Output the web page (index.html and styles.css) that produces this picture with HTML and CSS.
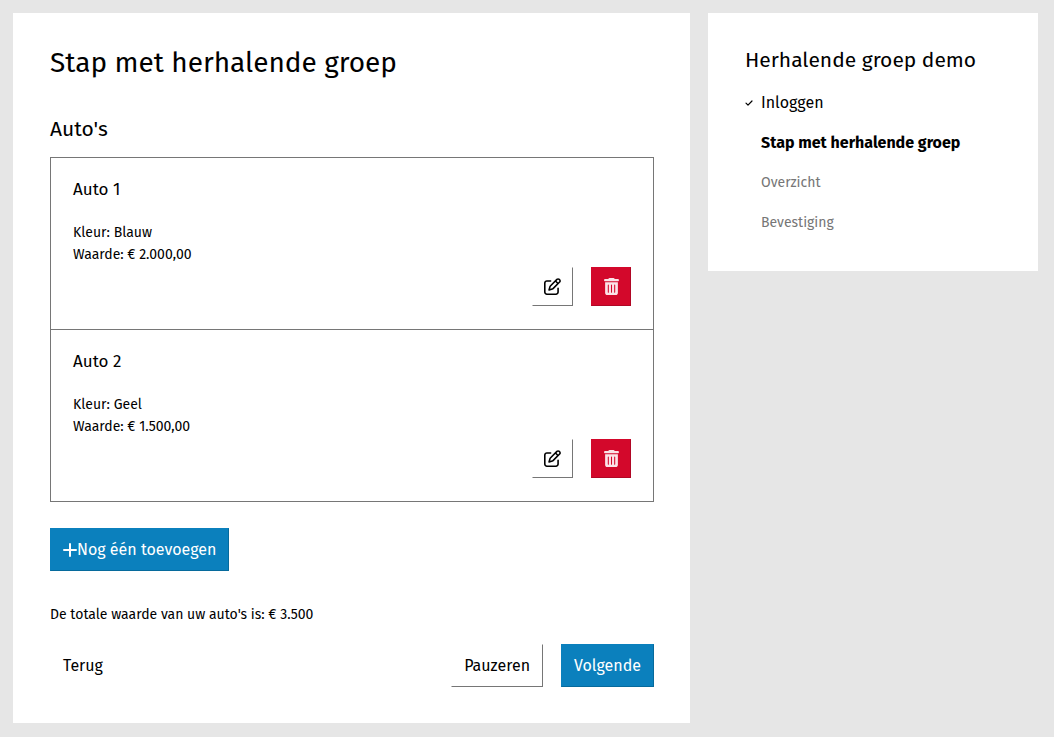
FILE: index.html
```html
<!DOCTYPE html>
<html lang="nl">
<head>
<meta charset="utf-8">
<meta name="viewport" content="width=device-width, initial-scale=1">
<title>Herhalende groep demo</title>
<link rel="stylesheet" href="styles.css">
</head>
<body>
<svg class="sprite" aria-hidden="true">
  <symbol id="icon-edit" viewBox="0 0 512 512"><path d="M441 58.900L453.100 71c9.400 9.400 9.400 24.600 0 33.900L424 134.100 377.900 88 407 58.900c9.400-9.400 24.600-9.400 33.900 0zM209.800 256.200L344 121.900 390.100 168 255.800 302.200c-2.900 2.900-6.500 5-10.400 6.100l-58.500 16.700 16.700-58.500c1.100-3.900 3.200-7.500 6.100-10.400zM373.100 25L175.800 222.200c-8.700 8.700-15 19.400-18.300 31.100l-28.600 100c-2.400 8.400-.1 17.400 6.100 23.600s15.200 8.500 23.600 6.100l100-28.600c11.800-3.400 22.500-9.700 31.100-18.300L487 138.900c28.100-28.100 28.100-73.700 0-101.800L474.900 25C446.800-3.100 401.200-3.100 373.100 25zM88 64C39.400 64 0 103.400 0 152V424c0 48.600 39.400 88 88 88H360c48.600 0 88-39.400 88-88V312c0-13.300-10.700-24-24-24s-24 10.700-24 24V424c0 22.100-17.900 40-40 40H88c-22.100 0-40-17.900-40-40V152c0-22.100 17.900-40 40-40H200c13.300 0 24-10.700 24-24s-10.700-24-24-24H88z"/></symbol>
  <symbol id="icon-trash" viewBox="0 0 448 512"><path d="M135.200 17.700C140.600 6.800 151.700 0 163.800 0H284.200c12.100 0 23.200 6.800 28.600 17.700L320 32h96c17.700 0 32 14.300 32 32s-14.300 32-32 32H32C14.300 96 0 81.700 0 64S14.300 32 32 32h96l7.200-14.300zM32 128H416V448c0 35.300-28.700 64-64 64H96c-35.300 0-64-28.700-64-64V128zm96 64c-8.800 0-16 7.200-16 16V432c0 8.800 7.200 16 16 16s16-7.200 16-16V208c0-8.800-7.200-16-16-16zm96 0c-8.800 0-16 7.200-16 16V432c0 8.800 7.200 16 16 16s16-7.200 16-16V208c0-8.800-7.200-16-16-16zm96 0c-8.800 0-16 7.200-16 16V432c0 8.800 7.200 16 16 16s16-7.200 16-16V208c0-8.800-7.200-16-16-16z"/></symbol>
  <symbol id="icon-plus" viewBox="0 0 14 14"><path d="M7 1v12M1 7h12" fill="none" stroke="currentColor" stroke-width="2" stroke-linecap="round"/></symbol>
  <symbol id="icon-check" viewBox="0 0 8 8"><path d="M1 4.200L3 6.200L7 2" fill="none" stroke="currentColor" stroke-width="1.200" stroke-linecap="round" stroke-linejoin="round"/></symbol>
</svg>
<div class="layout">
  <main class="card">
    <h1 class="title">Stap met herhalende groep</h1>
    <h2 class="group-title">Auto's</h2>
    <div class="group">
      <section class="item">
        <h3 class="item-title">Auto 1</h3>
        <p class="text">Kleur: Blauw<br>Waarde: € 2.000,00</p>
        <div class="item-actions">
          <button class="button icon-button" type="button" aria-label="Bewerken"><svg class="icon"><use href="#icon-edit"/></svg></button>
          <button class="button icon-button danger" type="button" aria-label="Verwijderen"><svg class="icon"><use href="#icon-trash"/></svg></button>
        </div>
      </section>
      <section class="item">
        <h3 class="item-title">Auto 2</h3>
        <p class="text">Kleur: Geel<br>Waarde: € 1.500,00</p>
        <div class="item-actions">
          <button class="button icon-button" type="button" aria-label="Bewerken"><svg class="icon"><use href="#icon-edit"/></svg></button>
          <button class="button icon-button danger" type="button" aria-label="Verwijderen"><svg class="icon"><use href="#icon-trash"/></svg></button>
        </div>
      </section>
    </div>
    <button class="button primary" type="button"><svg class="plus"><use href="#icon-plus"/></svg>Nog één toevoegen</button>
    <p class="text total">De totale waarde van uw auto's is: € 3.500</p>
    <div class="toolbar">
      <button class="button plain" type="button">Terug</button>
      <div class="toolbar-end">
        <button class="button" type="button">Pauzeren</button>
        <button class="button primary" type="submit">Volgende</button>
      </div>
    </div>
  </main>
  <nav class="card progress" aria-labelledby="progress-title">
    <h2 class="progress-title" id="progress-title">Herhalende groep demo</h2>
    <ol class="steps">
      <li class="step"><svg class="check"><use href="#icon-check"/></svg><a class="link" href="#inloggen">Inloggen</a></li>
      <li class="step"><a class="link current" href="#stap" aria-current="step">Stap met herhalende groep</a></li>
      <li class="step disabled">Overzicht</li>
      <li class="step disabled">Bevestiging</li>
    </ol>
  </nav>
</div>
</body>
</html>
```
FILE: styles.css
```css
* { box-sizing: border-box; }

body {
  margin: 0;
  background: #e6e6e6;
  color: #000;
  font: 14px/22px "Fira Sans", Roboto, "Noto Sans", sans-serif;
}

h1, h2, h3, p, ol { margin: 0; padding: 0; font-weight: 400; }

.sprite { display: none; }

.layout {
  display: grid;
  grid-template-columns: 677fr 330fr;
  align-items: start;
  gap: 18px;
  padding: 13px 16px 13px 13px;
}

.card { background: #fff; padding: 32px 36px 36px 37px; }

.title { font-size: 28px; line-height: 36px; }

.group-title {
  margin-top: 36px;
  font-size: 21px;
  line-height: 24px;
}

.group {
  margin: 16px 0 26px;
  border: 1px solid #767676;
}

.item { padding: 21px 22px 23px; }
.item + .item { border-top: 1px solid #767676; }

.item-title {
  margin-bottom: 21px;
  font-size: 17px;
  line-height: 22px;
}

.text { font-size: 14px; line-height: 22px; }

.item-actions {
  display: flex;
  justify-content: flex-end;
  gap: 18px;
  margin-top: 1px;
}

.button {
  display: inline-flex;
  align-items: center;
  justify-content: center;
  min-height: 43px;
  padding: 0 12px;
  border: 1px solid transparent;
  border-right-color: #767676;
  border-bottom-color: #767676;
  background: #fff;
  color: #000;
  font: inherit;
  font-size: 16px;
  line-height: 20px;
  cursor: pointer;
}

.icon-button { width: 41px; min-height: 39px; padding: 0; }
.icon { width: 17px; height: 17px; fill: currentColor; }

.primary { background: #0b80bd; border-color: #0b80bd #066a9c #066a9c #0b80bd; color: #fff; }
.danger { width: 40px; background: #d3082b; border-color: #d3082b #b00725 #b00725 #d3082b; color: #fbe3e8; }
.plain { border-color: transparent; }

.plus { width: 14px; height: 14px; }

.total { margin-top: 33px; }

.toolbar {
  display: flex;
  justify-content: space-between;
  margin-top: 18px;
}

.toolbar-end { display: flex; gap: 18px; }

.progress { padding-top: 35px; padding-bottom: 37px; }
.progress-title { font-size: 21px; line-height: 24px; }

.steps {
  display: grid;
  gap: 18px;
  margin-top: 20px;
  list-style: none;
}

.step {
  display: grid;
  grid-template-columns: 8px 1fr;
  align-items: center;
  column-gap: 8px;
  font-size: 16px;
  line-height: 22px;
}

.step > :last-child { grid-column: 2; }
.check { width: 8px; height: 8px; }
.link { color: #000; text-decoration: none; }
.current { font-weight: 700; }
.disabled { display: block; padding-left: 16px; color: #767676; font-size: 14px; }
```
